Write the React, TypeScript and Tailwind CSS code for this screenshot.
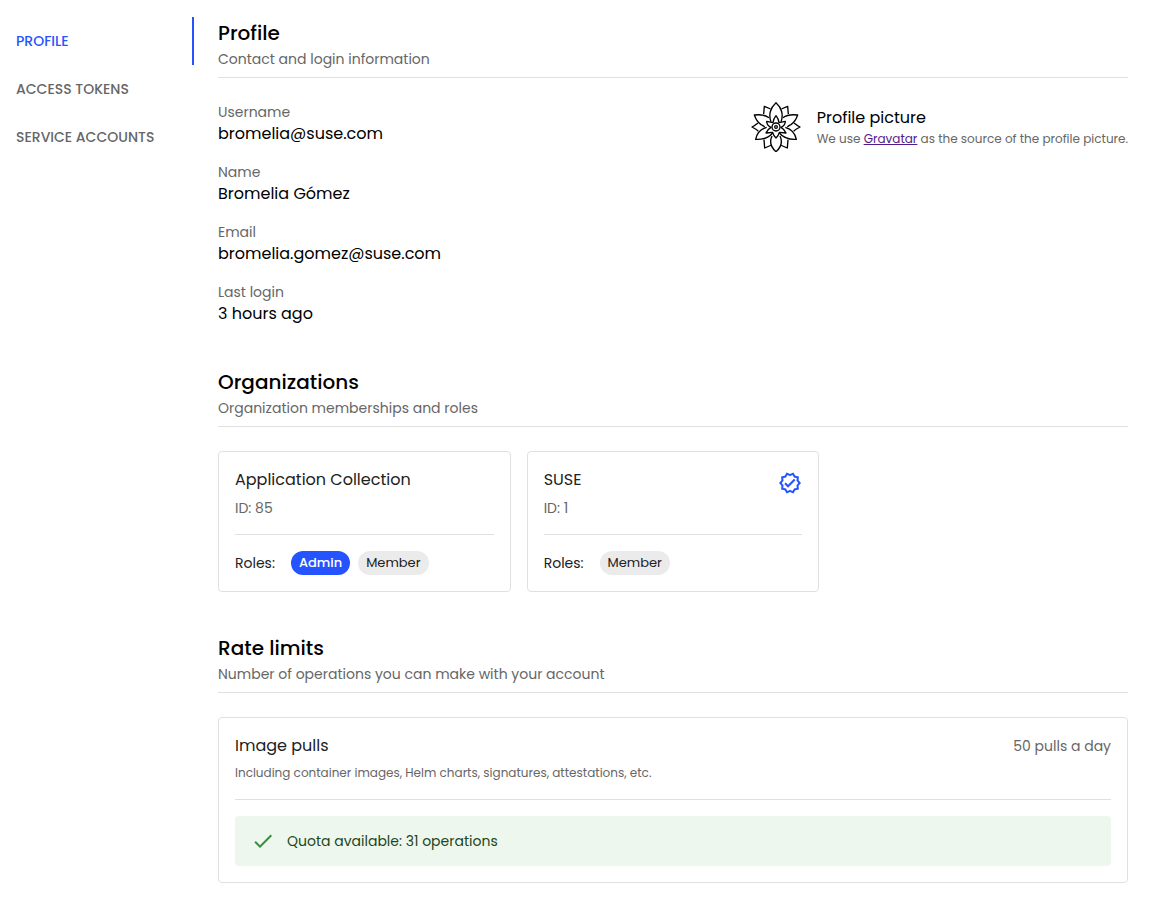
import React from 'react';
import { MdCheck, MdOutlineVerified } from 'react-icons/md';

const navItems = ['Profile', 'Access tokens', 'Service accounts'];

const details = [
  { label: 'Username', value: 'bromelia@suse.com' },
  { label: 'Name', value: 'Bromelia Gómez' },
  { label: 'Email', value: 'bromelia.gomez@suse.com' },
  { label: 'Last login', value: '3 hours ago' },
];

const organizations = [
  { id: 85, name: 'Application Collection', verified: false, roles: ['Admin', 'Member'] },
  { id: 1, name: 'SUSE', verified: true, roles: ['Member'] },
];

const Lotus = () => (
  <svg
    viewBox="32 29 150 150"
    className="h-[50px] w-[50px] shrink-0"
    fill="none"
    stroke="#000"
    strokeWidth="4"
    strokeLinejoin="round"
    role="img"
    aria-label="Profile picture"
  >
    <path d="M92 88C84 68 90 46 107 31C124 46 130 68 122 88" />
    <path d="M91 50L72 42L70 65M123 50L142 42L144 65" />
    <path d="M86 76C74 67 60 66 42 68C46 80 52 90 62 97M128 76C140 67 154 66 172 68C168 80 162 90 152 97" />
    <path d="M53 92C47 97 41 101 35 104C41 107 48 111 54 117M62 97C67 99 70 101 73 104M161 92C167 97 173 101 179 104C173 107 166 111 160 117M152 97C147 99 144 101 141 104" />
    <path d="M79 105C61 110 50 121 46 141C66 142 84 138 97 122M135 105C153 110 164 121 168 141C148 142 130 138 117 122" />
    <path d="M71 142L73 167L94 158M143 142L141 167L120 158" />
    <path d="M95 131C87 148 92 165 107 178C122 165 127 148 119 131" />
    <path d="M98 91L79 87C79 96 84 102 92 105C85 109 80 114 77 122L97 120C99 128 102 133 107 137C112 133 115 128 117 120L137 122C134 114 129 109 122 105C130 102 135 96 135 87L116 91C115 83 112 76 107 70C102 76 99 83 98 91Z" />
    <circle cx="107" cy="104" r="12" />
    <circle cx="107" cy="104" r="4" />
  </svg>
);

const SectionHeader = ({ title, subtitle }: { title: string; subtitle: string }) => (
  <header className="border-b border-[#e0e0e0] pb-2">
    <h2 className="text-xl leading-8 font-medium">{title}</h2>
    <p className="text-sm leading-5 text-[#666]">{subtitle}</p>
  </header>
);

const Role = ({ name }: { name: string }) => (
  <span
    className={`rounded-full px-2 text-[13px] leading-6 ${
      name === 'Admin' ? 'bg-[#2453ff] font-medium text-white' : 'bg-[#ebebeb]'
    }`}
  >
    {name}
  </span>
);

const App = () => {
  return (
    <div className="flex bg-white pb-4 font-[Poppins,Inter,sans-serif] text-black">
      <nav className="w-[194px] shrink-0 pt-[17px]">
        {navItems.map((item, index) => (
          <a
            key={item}
            href="#"
            className={`flex h-12 items-center border-r-2 pl-4 text-sm font-medium uppercase ${
              index === 0 ? 'border-[#2453ff] text-[#2453ff]' : 'border-transparent text-[#666]'
            }`}
          >
            {item}
          </a>
        ))}
      </nav>

      <main className="min-w-0 flex-1 px-6 pt-[17px]">
        <section>
          <SectionHeader title="Profile" subtitle="Contact and login information" />
          <div className="mt-6 flex justify-between">
            <dl className="space-y-4">
              {details.map((item) => (
                <div key={item.label}>
                  <dt className="text-sm leading-5 text-[#666]">{item.label}</dt>
                  <dd className="text-base leading-6">{item.value}</dd>
                </div>
              ))}
            </dl>
            <div className="flex items-start gap-4">
              <Lotus />
              <div className="pt-1">
                <h3 className="text-base leading-6">Profile picture</h3>
                <p className="text-xs leading-[18px] text-[#666]">
                  We use{' '}
                  <a href="#" className="text-[#551a8b] underline">
                    Gravatar
                  </a>{' '}
                  as the source of the profile picture.
                </p>
              </div>
            </div>
          </div>
        </section>

        <section className="mt-10">
          <SectionHeader title="Organizations" subtitle="Organization memberships and roles" />
          <div className="mt-6 grid grid-cols-3 gap-4">
            {organizations.map((org) => (
              <article key={org.id} className="rounded border border-[#e0e0e0] p-4 text-[#212121]">
                <div className="flex items-start justify-between border-b border-[#e0e0e0] pb-4">
                  <div>
                    <h3 className="text-base leading-6">{org.name}</h3>
                    <p className="mt-1.5 text-sm leading-5 text-[#666]">ID: {org.id}</p>
                  </div>
                  {org.verified && <MdOutlineVerified className="mt-[3px] h-6 w-6 text-[#2453ff]" aria-label="Verified" />}
                </div>
                <div className="mt-4 flex items-center">
                  <span className="mr-4 text-sm leading-6">Roles:</span>
                  <div className="flex gap-2">
                    {org.roles.map((role) => (
                      <Role key={role} name={role} />
                    ))}
                  </div>
                </div>
              </article>
            ))}
          </div>
        </section>

        <section className="mt-10">
          <SectionHeader title="Rate limits" subtitle="Number of operations you can make with your account" />
          <article className="mt-6 rounded border border-[#e0e0e0] p-4 text-[#212121]">
            <div className="flex justify-between">
              <h3 className="text-base leading-6">Image pulls</h3>
              <span className="text-sm leading-6 text-[#666]">50 pulls a day</span>
            </div>
            <p className="mt-1.5 border-b border-[#e0e0e0] pb-[17px] text-xs leading-[18px] text-[#666]">
              Including container images, Helm charts, signatures, attestations, etc.
            </p>
            <div role="status" className="mt-4 flex h-[50px] items-center rounded bg-[#edf7ed] px-4 text-[#1e4620]">
              <MdCheck className="mr-3 h-6 w-6 text-[#388e3c]" />
              <span className="text-sm">Quota available: 31 operations</span>
            </div>
          </article>
        </section>
      </main>
    </div>
  );
};

export default App;
